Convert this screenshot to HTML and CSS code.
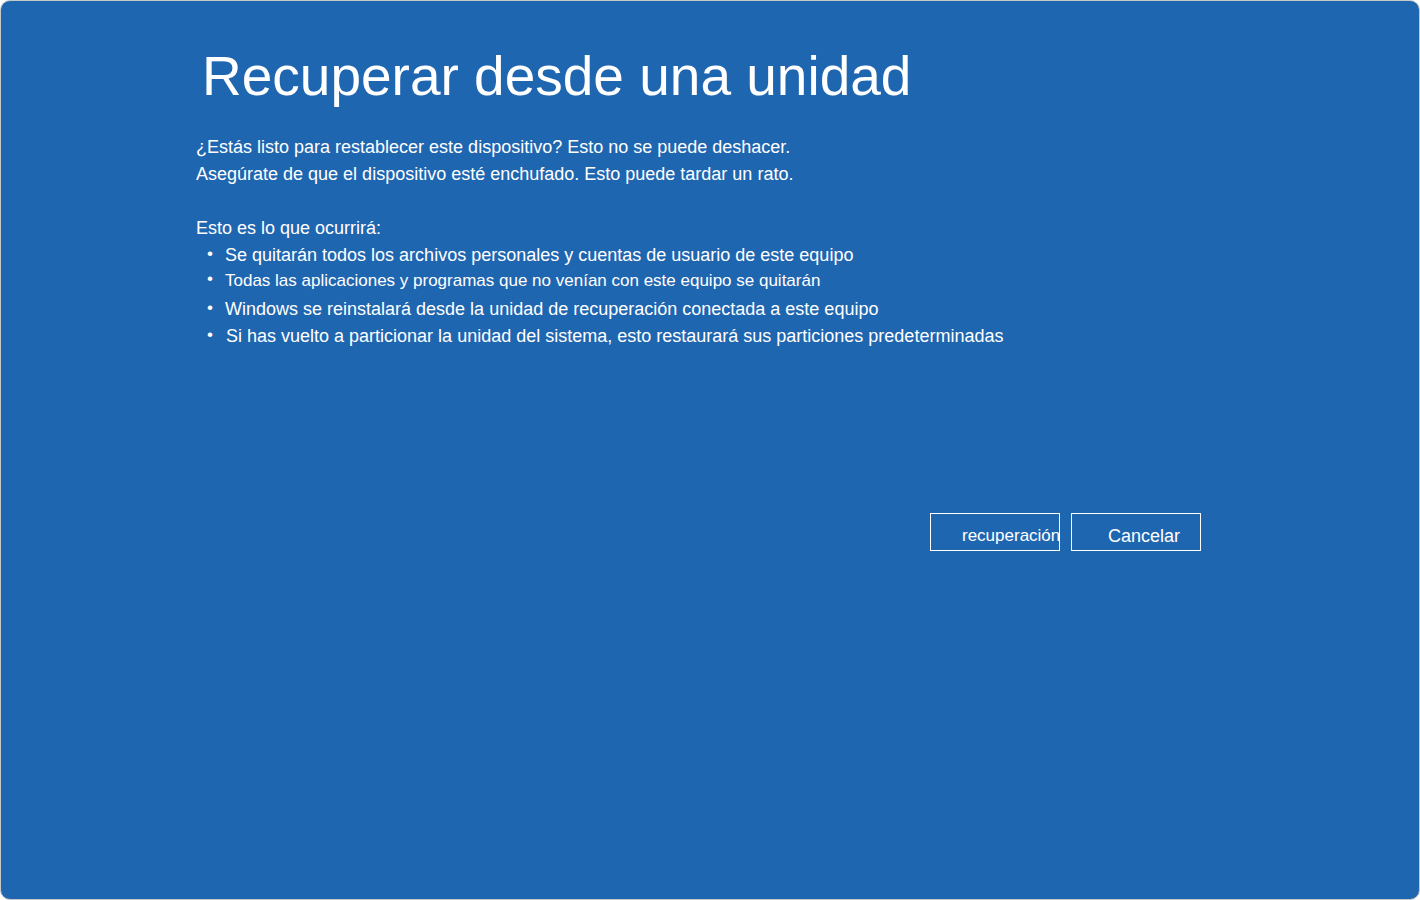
FILE: index.html
```html
<!DOCTYPE html>
<html lang="es">
<head>
  <meta charset="UTF-8" />
  <meta name="viewport" content="width=device-width, initial-scale=1" />
  <title>Recuperar desde una unidad</title>
  <link rel="stylesheet" href="styles.css">
</head>
<body>

  <div class="pantalla">
    <div class="contenido">
      <h1>Recuperar desde una unidad</h1>

      <p class="aviso">¿Estás listo para restablecer este dispositivo? Esto no se puede deshacer.</p>
      <p class="aviso">Asegúrate de que el dispositivo esté enchufado. Esto puede tardar un rato.</p>

      <p class="aviso espacio">Esto es lo que ocurrirá:</p>
      <ul class="lista">
        <li>Se quitarán todos los archivos personales y cuentas de usuario de este equipo</li>
        <li class="fino">Todas las aplicaciones y programas que no venían con este equipo se quitarán</li>
        <li>Windows se reinstalará desde la unidad de recuperación conectada a este equipo</li>
        <li class="ultimo">Si has vuelto a particionar la unidad del sistema, esto restaurará sus particiones predeterminadas</li>
      </ul>

      <div class="botones">
        <button class="btn btn-recuperar">recuperación</button>
        <button class="btn btn-cancelar">Cancelar</button>
      </div>
    </div>
  </div>

</body>
</html>
```

FILE: styles.css
```css
html, body {
  margin: 0;
  padding: 0;
  height: 100%;
}
body {
  background: #ffffff;
  font-family: "Liberation Sans", Arial, sans-serif;
  color: #ffffff;
}
.pantalla {
  height: 100%;
  background: #1f66b1;
  border: 1px solid #c9c9c9;
  border-radius: 10px;
  box-sizing: border-box;
}
.contenido {
  padding: 40px 0 0 195px;
  width: 1005px;
}
h1 {
  font-weight: normal;
  font-size: 55px;
  margin: 0 0 23px 6px;
  line-height: 70px;
}
.aviso {
  margin: 0;
  font-size: 18px;
  line-height: 27px;
}
.espacio {
  margin-top: 27px;
}
.lista {
  list-style: none;
  margin: 0;
  padding: 0 0 0 12px;
}
.lista li {
  font-size: 18px;
  line-height: 27px;
  padding-left: 17px;
  position: relative;
}
.lista li::before {
  content: "•";
  position: absolute;
  left: -1px;
  top: -2px;
  font-size: 17px;
}
.lista li.fino {
  font-size: 17px;
  line-height: 23px;
  margin-bottom: 4px;
}
.lista li.ultimo {
  padding-left: 18px;
}
.botones {
  display: flex;
  justify-content: flex-end;
  gap: 11px;
  margin-top: 163px;
}
.btn {
  width: 130px;
  height: 38px;
  background: transparent;
  border: 1px solid #ffffff;
  color: #ffffff;
  font-family: "Liberation Sans", Arial, sans-serif;
  font-size: 18px;
  padding: 8px 0 0 0;
  white-space: nowrap;
  overflow: hidden;
}
.btn-recuperar {
  font-size: 17px;
  text-align: left;
  padding-left: 31px;
}
.btn-cancelar {
  text-align: left;
  padding-left: 36px;
}
```
